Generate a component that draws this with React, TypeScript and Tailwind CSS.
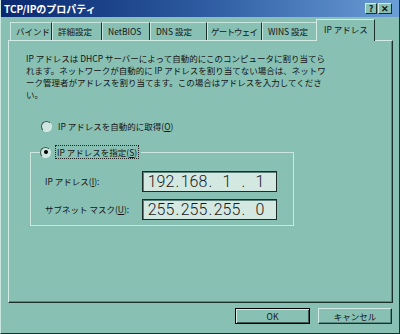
const tabs = [
  { label: 'バインド', w: 'w-[42px]', pad: 'pl-[5px]' },
  { label: '詳細設定', w: 'w-[50px]', pad: 'pl-[5px]' },
  { label: 'NetBIOS', w: 'w-[48px]', pad: 'pl-[5px]' },
  { label: 'DNS 設定', w: 'w-[57px]', pad: 'pl-[5px]' },
  { label: 'ゲートウェイ', w: 'w-[55px]', pad: 'pl-[3px] tracking-[-0.8px]' },
  { label: 'WINS 設定', w: 'w-[56px]', pad: 'pl-[5px]' },
];

function Radio({ checked }: { checked?: boolean }) {
  return (
    <span className="w-[11px] h-[11px] rounded-full border border-t-[#3c5a55] border-l-[#3c5a55] border-b-[#d3ece6] border-r-[#d3ece6] bg-[#cfe6e0] flex items-center justify-center flex-shrink-0">
      {checked && <span className="w-[4px] h-[4px] rounded-full bg-black" />}
    </span>
  );
}

function IpBox({ parts }: { parts: string[] }) {
  return (
    <div className="w-[135px] h-[21px] border border-[#1c2c29] shadow-[inset_1px_1px_0_#5d7f79] bg-[#d4e8e2] flex items-center pl-[5px] font-['Roboto',sans-serif] font-light text-[16px] text-[#1a1a1a]">
      {parts.map((p, i) => (
        <div key={i} className="flex items-center">
          <div className="w-[26px] flex justify-center">{p}</div>
          {i < 3 && <div className="w-[7px] flex justify-center">.</div>}
        </div>
      ))}
    </div>
  );
}

export default function App() {
  return (
    <div className="w-[400px] h-[334px] bg-[#88c0b4] flex flex-col border-l border-r border-b border-l-[#c9e6df] border-r-[#1b2f2b] border-b-[#1b2f2b] font-['Noto_Sans_CJK_JP',sans-serif] text-[#141414] overflow-hidden">
      {/* Title bar */}
      <div className="h-[17px] flex items-center justify-between pl-[3px] pr-[7px] bg-gradient-to-r from-[#0a2870] via-[#2d5aa0] to-[#6b9dd6]">
        <span className="text-white font-bold text-[10px] leading-none">TCP/IPのプロパティ</span>
        <div className="flex gap-[1px]">
          <div className="w-[12px] h-[11px] bg-[#88c0b4] border border-t-[#d3ece6] border-l-[#d3ece6] border-b-[#1b2f2b] border-r-[#1b2f2b] flex items-center justify-center text-[9px] font-bold leading-none">?</div>
          <div className="w-[14px] h-[11px] bg-[#88c0b4] border border-t-[#d3ece6] border-l-[#d3ece6] border-b-[#1b2f2b] border-r-[#1b2f2b] flex items-center justify-center text-[9px] font-bold leading-none">✕</div>
        </div>
      </div>

      {/* Tabs */}
      <div className="h-[23px] flex items-end pl-[9px] text-[8.5px]">
        {tabs.map((t) => (
          <div
            key={t.label}
            className={`${t.w} ${t.pad} h-[18px] flex-shrink-0 flex items-center border-t border-l border-r border-t-[#c9e6df] border-l-[#c9e6df] border-r-[#1b2f2b] whitespace-nowrap`}
          >
            {t.label}
          </div>
        ))}
        <div className="w-[59px] h-[22px] -ml-[2px] -mb-[1px] relative z-10 bg-[#88c0b4] flex items-center pl-[7px] pb-[2px] border-t border-l border-r border-t-[#d3ece6] border-l-[#d3ece6] border-r-[#1b2f2b] whitespace-nowrap">
          IP アドレス
        </div>
      </div>

      {/* Panel */}
      <div className="ml-[7px] w-[385px] h-[263px] border border-t-[#d3ece6] border-l-[#d3ece6] border-b-[#1b2f2b] border-r-[#1b2f2b] shadow-[inset_-1px_-1px_0_#5a8a81] pl-[17px] pt-[11px] text-[8.5px]">
        <p className="leading-[12px]">
          IP アドレスは DHCP サーバーによって自動的にこのコンピュータに割り当てら<br />
          れます。ネットワークが自動的に IP アドレスを割り当てない場合は、ネットワ<br />
          ーク管理者がアドレスを割り当てます。この場合はアドレスを入力してくださ<br />
          い。
        </p>

        <div className="mt-[19px] ml-[15px] h-[14px] flex items-center gap-[5px]">
          <Radio />
          <span className="pl-[1px]">
            IP アドレスを自動的に取得(<span className="underline">O</span>)
          </span>
        </div>

        <fieldset className="mt-[12px] ml-[4px] w-[264px] border border-[#cbe7e0] pb-[5px]">
          <legend className="ml-[9px] pr-[2px]">
            <div className="h-[14px] flex items-center gap-[4px]">
              <Radio checked />
              <span className="border border-dotted border-[#222] px-[1px] leading-[12px]">
                IP アドレスを指定(<span className="underline">S</span>)
              </span>
            </div>
          </legend>
          <div className="mt-[12px] flex items-center pl-[14px]">
            <span className="w-[97px]">
              IP アドレス(<span className="underline">I</span>):
            </span>
            <IpBox parts={['192', '168', '1', '1']} />
          </div>
          <div className="mt-[7px] flex items-center pl-[14px]">
            <span className="w-[97px]">
              サブネット マスク(<span className="underline">U</span>):
            </span>
            <IpBox parts={['255', '255', '255', '0']} />
          </div>
        </fieldset>
      </div>

      {/* Buttons */}
      <div className="mt-[5px] flex justify-end gap-[8px] pr-[7px] text-[8.5px]">
        <div className="w-[75px] h-[16px] border border-black shadow-[inset_1px_1px_0_#d3ece6,inset_-1px_-1px_0_#3c5a55] flex items-center justify-center">
          OK
        </div>
        <div className="w-[74px] h-[16px] border border-t-[#d3ece6] border-l-[#d3ece6] border-b-[#1b2f2b] border-r-[#1b2f2b] shadow-[inset_-1px_-1px_0_#5a8a81] flex items-center justify-center">
          キャンセル
        </div>
      </div>
    </div>
  );
}
